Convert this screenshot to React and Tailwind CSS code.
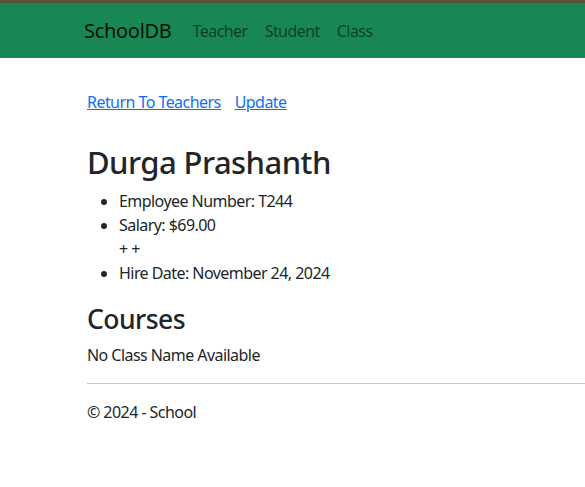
import React from 'react';

export default function App() {
    return (
        <div className="min-h-[487px] bg-white text-[#212529] font-['Noto_Sans',sans-serif] tracking-[-0.55px]">
            {/* Top strip */}
            <div className="h-[3px] bg-[#5b5038]" />

            {/* Navbar */}
            <nav className="h-[55px] bg-[#198754] flex items-center pl-[84px]">
                <a href="#" className="text-[20px] text-black/90 tracking-[-0.3px] mr-[21px]">SchoolDB</a>
                <div className="flex gap-[17px] text-[16px] text-black/55">
                    <a href="#">Teacher</a>
                    <a href="#">Student</a>
                    <a href="#">Class</a>
                </div>
            </nav>

            <main className="pl-[87px] text-[16px] leading-[24px]">
                <div className="flex gap-[14px] pt-[32px] text-[#0d6efd] underline">
                    <a href="#">Return To Teachers</a>
                    <a href="#">Update</a>
                </div>

                <h1 className="mt-[30px] mb-[8px] text-[31px] leading-[37px] font-medium">Durga Prashanth</h1>
                <ul className="list-disc pl-[32px] mb-[18px]">
                    <li>Employee Number: T244</li>
                    <li>Salary: $69.00</li>
                    <div>+ +</div>
                    <li>Hire Date: November 24, 2024</li>
                </ul>

                <h2 className="mb-[8px] text-[26.5px] leading-[32px] font-medium">Courses</h2>
                <p>No Class Name Available</p>

                <hr className="mt-[16px] mb-[16px] border-[#c8c9ca]" />
                <footer>© 2024 - School</footer>
            </main>
        </div>
    );
}
